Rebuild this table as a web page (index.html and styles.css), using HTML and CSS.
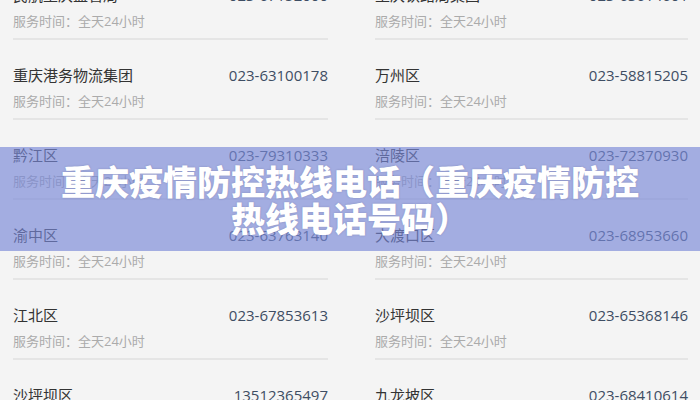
FILE: index.html
```html
<!DOCTYPE html>
<html lang="zh-CN">
<head>
  <meta charset="UTF-8">
  <meta name="viewport" content="width=device-width, initial-scale=1.0">
  <title>重庆疫情防控热线电话</title>
  <link rel="stylesheet" href="styles.css">
</head>
<body>
  <div class="list">
    <div class="col">
      <div class="item"><div class="row"><span class="name">民航重庆监管局</span><span class="tel">023-67152000</span></div><div class="time">服务时间：全天24小时</div></div>
      <div class="item"><div class="row"><span class="name">重庆港务物流集团</span><span class="tel">023-63100178</span></div><div class="time">服务时间：全天24小时</div></div>
      <div class="item"><div class="row"><span class="name">黔江区</span><span class="tel">023-79310333</span></div><div class="time">服务时间：全天24小时</div></div>
      <div class="item"><div class="row"><span class="name">渝中区</span><span class="tel">023-63763140</span></div><div class="time">服务时间：全天24小时</div></div>
      <div class="item"><div class="row"><span class="name">江北区</span><span class="tel">023-67853613</span></div><div class="time">服务时间：全天24小时</div></div>
      <div class="item"><div class="row"><span class="name">沙坪坝区</span><span class="tel">13512365497</span></div><div class="time">服务时间：全天24小时</div></div>
    </div>
    <div class="col">
      <div class="item"><div class="row"><span class="name">重庆铁路局集团</span><span class="tel">023-63614601</span></div><div class="time">服务时间：全天24小时</div></div>
      <div class="item"><div class="row"><span class="name">万州区</span><span class="tel">023-58815205</span></div><div class="time">服务时间：全天24小时</div></div>
      <div class="item"><div class="row"><span class="name">涪陵区</span><span class="tel">023-72370930</span></div><div class="time">服务时间：全天24小时</div></div>
      <div class="item"><div class="row"><span class="name">大渡口区</span><span class="tel">023-68953660</span></div><div class="time">服务时间：全天24小时</div></div>
      <div class="item"><div class="row"><span class="name">沙坪坝区</span><span class="tel">023-65368146</span></div><div class="time">服务时间：全天24小时</div></div>
      <div class="item"><div class="row"><span class="name">九龙坡区</span><span class="tel">023-68410614</span></div><div class="time">服务时间：全天24小时</div></div>
    </div>
  </div>

  <div class="banner">
    <h1>重庆疫情防控热线电话（重庆疫情防控热线电话号码）</h1>
  </div>
</body>
</html>
```

FILE: styles.css
```css
body {
  margin: 0;
  background: #f4f4f4;
  font-family: 'Open Sans', 'Noto Sans CJK SC', sans-serif;
  overflow: hidden;
  height: 400px;
}
.list {
  display: grid;
  grid-template-columns: 315px 313px;
  gap: 47px;
  padding: 0 12px 0 13px;
  margin-top: -40px;
}
.item {
  height: 80px;
  box-sizing: border-box;
  padding-top: 25px;
  border-bottom: 2px solid #e5e5e5;
}
.row {
  display: flex;
  justify-content: space-between;
  align-items: center;
  height: 20px;
  line-height: 20px;
}
.name { font-size: 15px; color: #333; }
.tel { font-size: 15px; color: #3e4d63; }
.time {
  margin-top: 6px;
  font-size: 13px;
  line-height: 20px;
  color: #ababab;
}
.banner {
  position: absolute;
  left: 0; right: 0;
  top: 147px;
  height: 104px;
  background: rgba(120, 135, 215, 0.65);
  display: flex;
  align-items: center;
  justify-content: center;
}
.banner h1 {
  margin: 0;
  width: 590px;
  text-align: center;
  font-family: 'Noto Sans CJK SC', sans-serif;
  font-weight: 900;
  font-size: 34px;
  line-height: 37px;
  color: #fff;
  text-shadow: 0 0 2px rgba(60, 60, 100, 0.3);
}
```
